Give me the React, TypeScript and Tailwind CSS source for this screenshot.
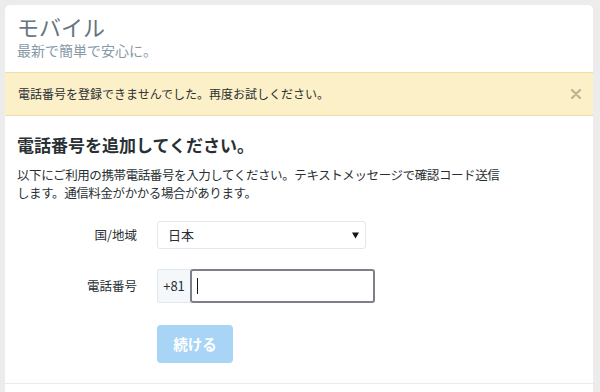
const font = {
  fontFamily: '"Noto Sans CJK JP", "Noto Sans", "Liberation Sans", sans-serif',
};

export default function App() {
  return (
    <div
      className="h-[392px] w-[600px] overflow-hidden bg-[#ececec] pl-[5px] pr-[7px] pt-[5px]"
      style={font}
    >
      <div className="rounded-t-[5px] bg-white">
        {/* Header */}
        <div className="px-[12px] pt-[7px]">
          <h1 className="text-[22px] leading-[28px] text-[#66757f]">モバイル</h1>
          <p className="mt-[1px] text-[14px] leading-[18px] text-[#8899a6]">
            最新で簡単で安心に。
          </p>
        </div>

        {/* Alert */}
        <div className="mt-[13px] flex h-[44px] items-center justify-between border-y border-[#f1dea6] bg-[#fcf0c8] pl-[13px] pr-[12px]">
          <span className="text-[12px] text-[#292f33]">
            電話番号を登録できませんでした。再度お試しください。
          </span>
          <svg width="10" height="10" viewBox="0 0 10 10" className="text-[#bdb597]">
            <path d="M1 1 L9 9 M9 1 L1 9" stroke="currentColor" strokeWidth="2.4" strokeLinecap="round" />
          </svg>
        </div>

        {/* Body */}
        <div className="px-[12px] pb-[20px] pt-[17px]">
          <h2 className="text-[17px] font-bold leading-[24px] text-[#292f33]">
            電話番号を追加してください。
          </h2>
          <p className="mt-[9px] max-w-[488px] text-[12.5px] leading-[18px] tracking-[-0.4px] text-[#292f33]">
            以下にご利用の携帯電話番号を入力してください。テキストメッセージで確認コード送信します。通信料金がかかる場合があります。
          </p>

          <div className="mt-[19px] flex items-center">
            <label className="w-[120px] text-right text-[12.5px] text-[#292f33]">国/地域</label>
            <div className="ml-[20px] flex h-[28px] w-[209px] items-center justify-between rounded-[3px] border border-[#e1e8ed] pl-[10px] pr-[6px]">
              <span className="text-[13px] text-[#292f33]">日本</span>
              <svg width="7" height="7" viewBox="0 0 7 7" className="text-[#14171a]">
                <path d="M0 0.5 H7 L3.5 6.5 Z" fill="currentColor" />
              </svg>
            </div>
          </div>

          <div className="mt-[20px] flex items-center">
            <label className="w-[120px] text-right text-[12.5px] text-[#292f33]">電話番号</label>
            <div className="ml-[20px] flex h-[34px]">
              <div className="flex w-[33px] items-center justify-center rounded-l-[3px] border border-r-0 border-[#e1e8ed] bg-[#f5f8fa] text-[13px] text-[#292f33]">
                +81
              </div>
              <div className="flex w-[185px] items-center rounded-[3px] border-2 border-[#7b8089] pl-[5px]">
                <div className="h-[16px] w-px bg-[#14171a]" />
              </div>
            </div>
          </div>

          <div className="mt-[22px] pl-[140px]">
            <button className="h-[38px] w-[76px] rounded-[4px] bg-[#a8d4f6] text-[14.5px] font-bold text-white">
              続ける
            </button>
          </div>
        </div>

        <div className="h-[20px] border-t border-[#e6ecf0]" />
      </div>
    </div>
  );
}
